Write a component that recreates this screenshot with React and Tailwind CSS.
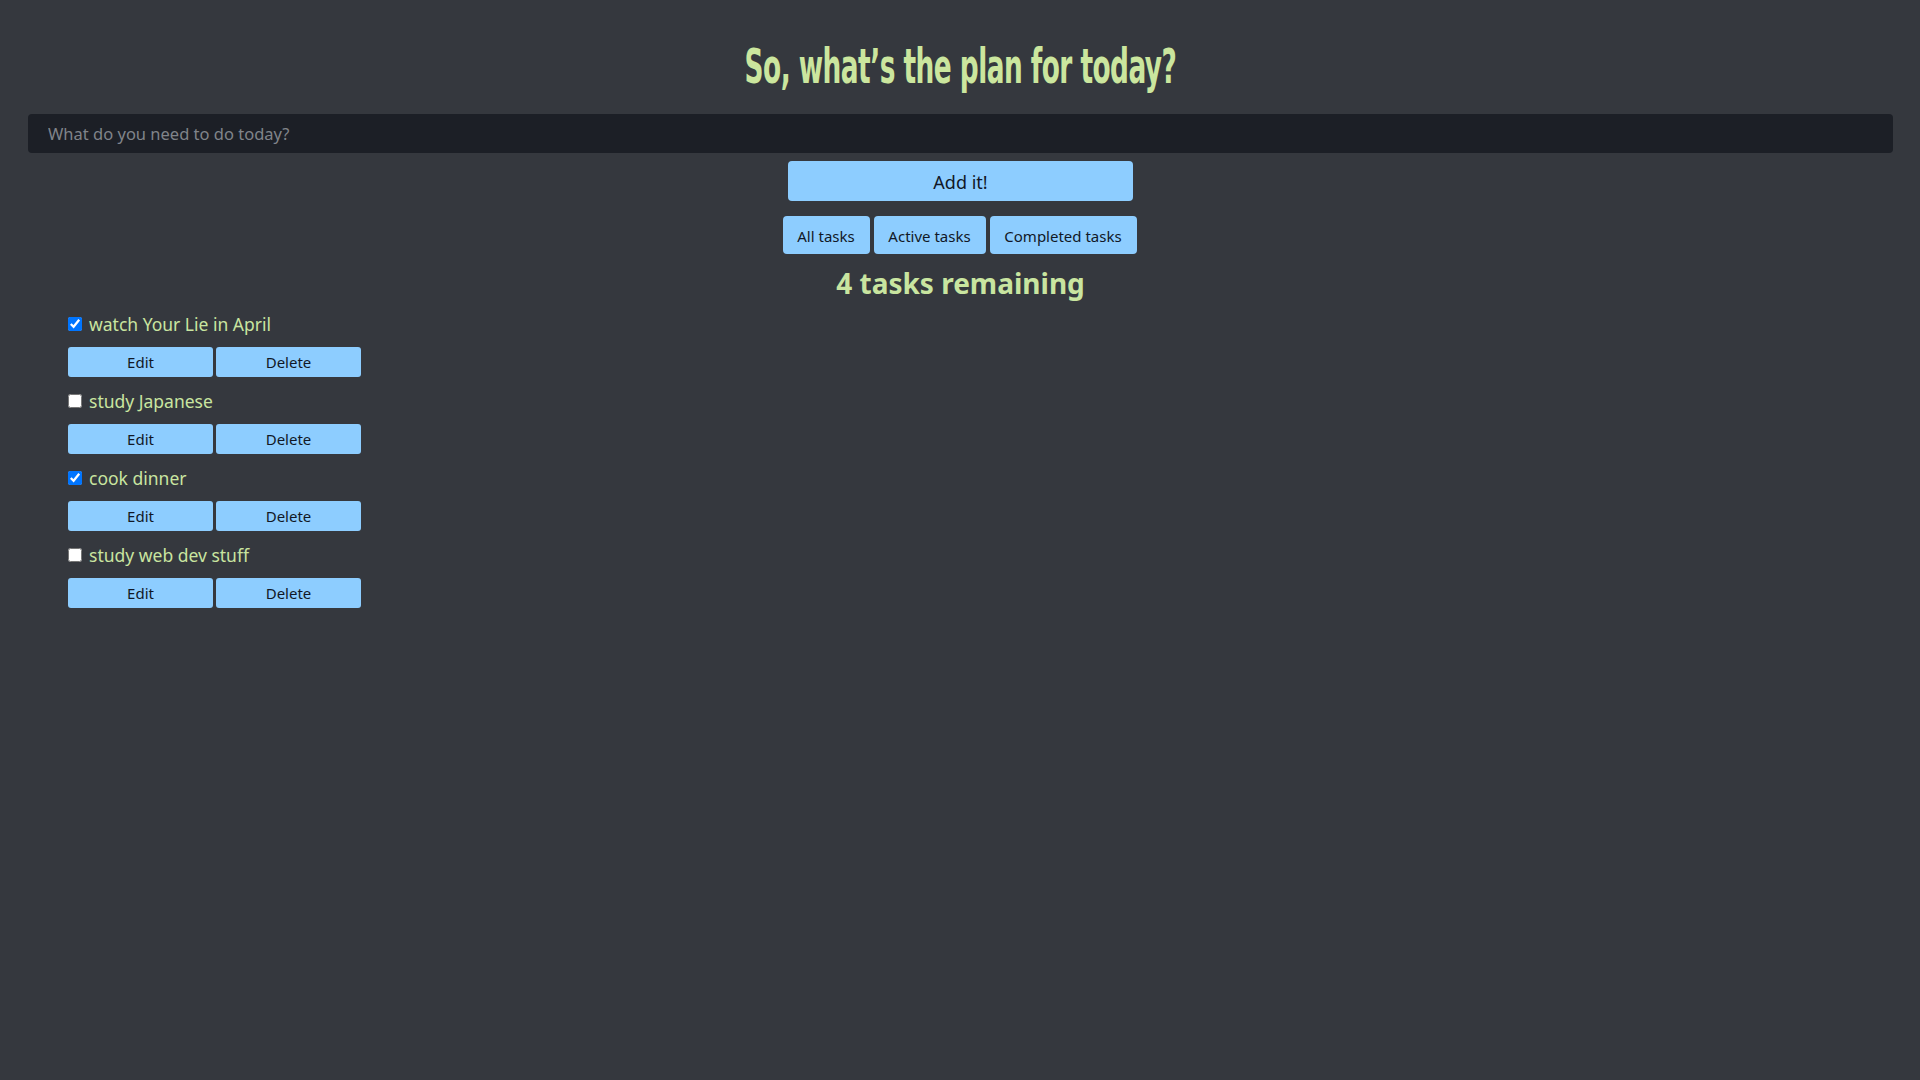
import React, { useState } from 'react';

const initialTasks = [
  { id: 1, name: 'watch Your Lie in April', done: true },
  { id: 2, name: 'study Japanese', done: false },
  { id: 3, name: 'cook dinner', done: true },
  { id: 4, name: 'study web dev stuff', done: false },
];

const App = () => {
  const [tasks, setTasks] = useState(initialTasks);

  const toggle = (id) =>
    setTasks(tasks.map((t) => (t.id === id ? { ...t, done: !t.done } : t)));

  return (
    <div className="min-h-screen bg-[#35383e] pl-[28px] pr-[27px] font-['Noto_Sans',sans-serif] text-[#c9e5a0]">
      {/* Header */}
      <div className="pt-[42px] mb-[24px] flex justify-center">
        <h1 className="inline-block scale-x-[0.55] text-[48px] leading-[48px] font-bold tracking-[-1px] whitespace-nowrap text-[#cbe69e] font-['DejaVu_Sans',sans-serif]">
          So, what’s the plan for today?
        </h1>
      </div>

      {/* New task form */}
      <input
        type="text"
        placeholder="What do you need to do today?"
        className="block w-full h-[39px] rounded-[4px] bg-[#1c1f26] px-[20px] text-[16.5px] text-gray-300 placeholder:text-[#80848a] outline-none"
      />
      <div className="flex justify-center mt-[8px]">
        <button className="w-[345px] h-[40px] rounded-[4px] bg-[#8dcdff] pt-[3px] text-[18px] text-[#111827]">
          Add it!
        </button>
      </div>

      {/* Filters */}
      <div className="flex justify-center gap-[4px] mt-[15px] pr-[2px]">
        <button className="w-[87px] h-[38px] rounded-[4px] bg-[#8dcdff] pt-[2px] text-[15px] text-[#111827]">All tasks</button>
        <button className="w-[112px] h-[38px] rounded-[4px] bg-[#8dcdff] pt-[2px] text-[15px] text-[#111827]">Active tasks</button>
        <button className="w-[147px] h-[38px] rounded-[4px] bg-[#8dcdff] pt-[2px] text-[15px] text-[#111827]">Completed tasks</button>
      </div>

      <h2 className="mt-[8px] h-[42px] flex items-center justify-center text-[28px] font-bold text-[#c9e5a0]">
        4 tasks remaining
      </h2>

      {/* Task list */}
      <ul className="pl-[40px] mt-[8px]">
        {tasks.map((task) => (
          <li key={task.id} className="mb-[12px]">
            <div className="flex items-center h-[24px]">
              <input
                type="checkbox"
                checked={task.done}
                onChange={() => toggle(task.id)}
                className="m-0 w-[14px] h-[14px]"
              />
              <span className="ml-[7px] text-[17.5px]">{task.name}</span>
            </div>
            <div className="flex gap-[3px] mt-[11px]">
              <button className="w-[145px] h-[30px] rounded-[3px] bg-[#8dcdff] text-[15px] text-[#111827]">Edit</button>
              <button className="w-[145px] h-[30px] rounded-[3px] bg-[#8dcdff] text-[15px] text-[#111827]">Delete</button>
            </div>
          </li>
        ))}
      </ul>
    </div>
  );
};

export default App;
